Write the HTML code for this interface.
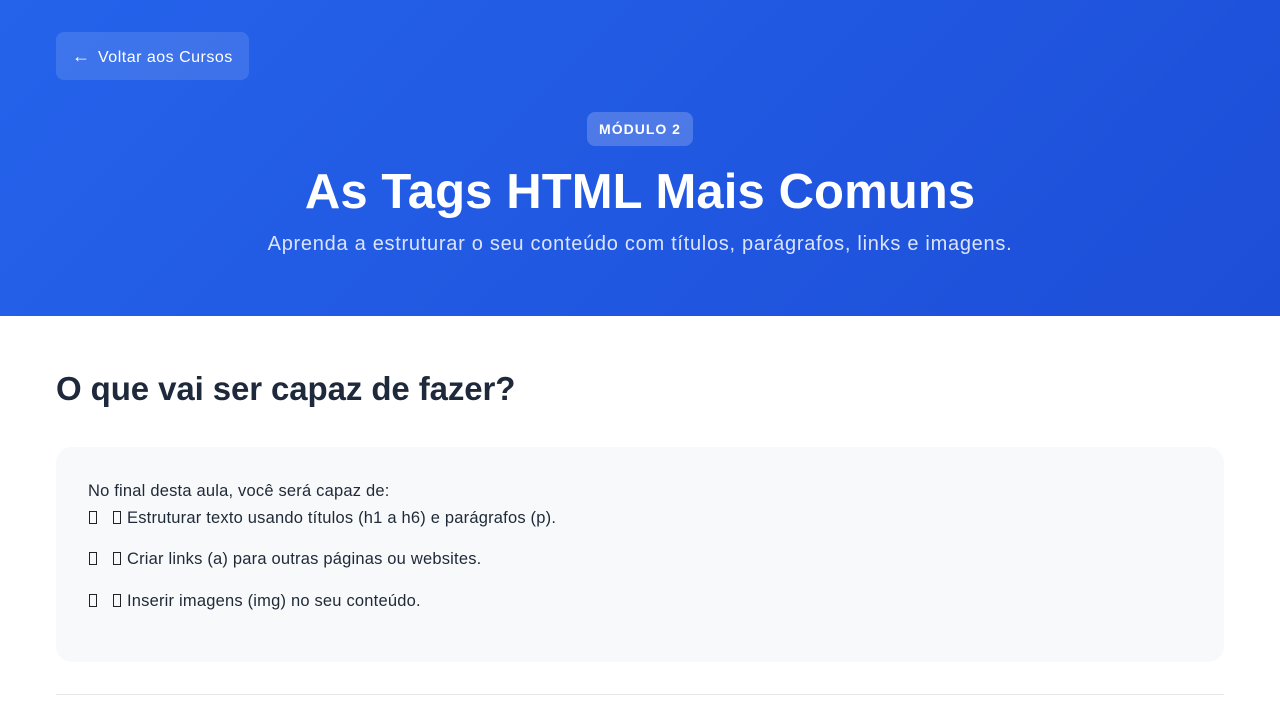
<!DOCTYPE html>
<html><head><meta charset="utf-8"><style>
*{margin:0;padding:0;box-sizing:border-box}
body{width:1280px;height:720px;overflow:hidden;background:#fff;font-family:"Liberation Sans",sans-serif;color:#1f2937}
.hero{height:316px;background:linear-gradient(135deg,#2563eb 0%,#1d4ed8 100%);position:relative;color:#fff;text-align:center}
.back{position:absolute;left:56px;top:32px;width:193px;height:48px;border-radius:8px;background:rgba(255,255,255,0.12);color:#fff;font-size:16px;line-height:48px;text-align:left;padding-left:16px;letter-spacing:0.5px}
.back span{display:inline-block;margin-right:8px;font-size:18px;letter-spacing:0}
.badge{position:absolute;left:587px;top:112px;width:106px;height:34px;border-radius:8px;background:rgba(255,255,255,0.2);font-size:14px;font-weight:bold;letter-spacing:1px;line-height:34px}
h1{position:absolute;left:0;right:0;top:161px;font-size:49px;font-weight:bold;line-height:62px;letter-spacing:0.1px}
.sub{position:absolute;left:0;right:0;top:231px;font-size:20px;color:#dbe4fb;line-height:26px;letter-spacing:0.72px}
h2{position:absolute;left:56px;top:370px;font-size:33px;font-weight:bold;color:#1e293b;letter-spacing:-0.1px}
.card{position:absolute;left:56px;top:447px;width:1168px;height:215px;background:#f8f9fb;border-radius:16px}
.t{position:absolute;left:89px;font-size:16.5px;color:#1f2937;line-height:20px;letter-spacing:0.2px}
.box{display:inline-block;width:8px;height:13px;border:1px solid #222;vertical-align:-1px}
hr{position:absolute;left:56px;top:694px;width:1168px;border:0;border-top:1px solid #e5e7eb}
</style></head><body>
<div class="hero">
<div class="back"><span>←</span>Voltar aos Cursos</div>
<div class="badge">MÓDULO 2</div>
<h1>As Tags HTML Mais Comuns</h1>
<div class="sub">Aprenda a estruturar o seu conteúdo com títulos, parágrafos, links e imagens.</div>
</div>
<h2>O que vai ser capaz de fazer?</h2>
<div class="card"></div>
<div class="t" style="top:481px;left:88px">No final desta aula, você será capaz de:</div>
<div class="t" style="top:508px"><span class="box"></span><span class="box" style="margin-left:16px;margin-right:6px"></span>Estruturar texto usando títulos (h1 a h6) e parágrafos (p).</div>
<div class="t" style="top:549px"><span class="box"></span><span class="box" style="margin-left:16px;margin-right:6px"></span>Criar links (a) para outras páginas ou websites.</div>
<div class="t" style="top:591px"><span class="box"></span><span class="box" style="margin-left:16px;margin-right:6px"></span>Inserir imagens (img) no seu conteúdo.</div>
<hr>
</body></html>
